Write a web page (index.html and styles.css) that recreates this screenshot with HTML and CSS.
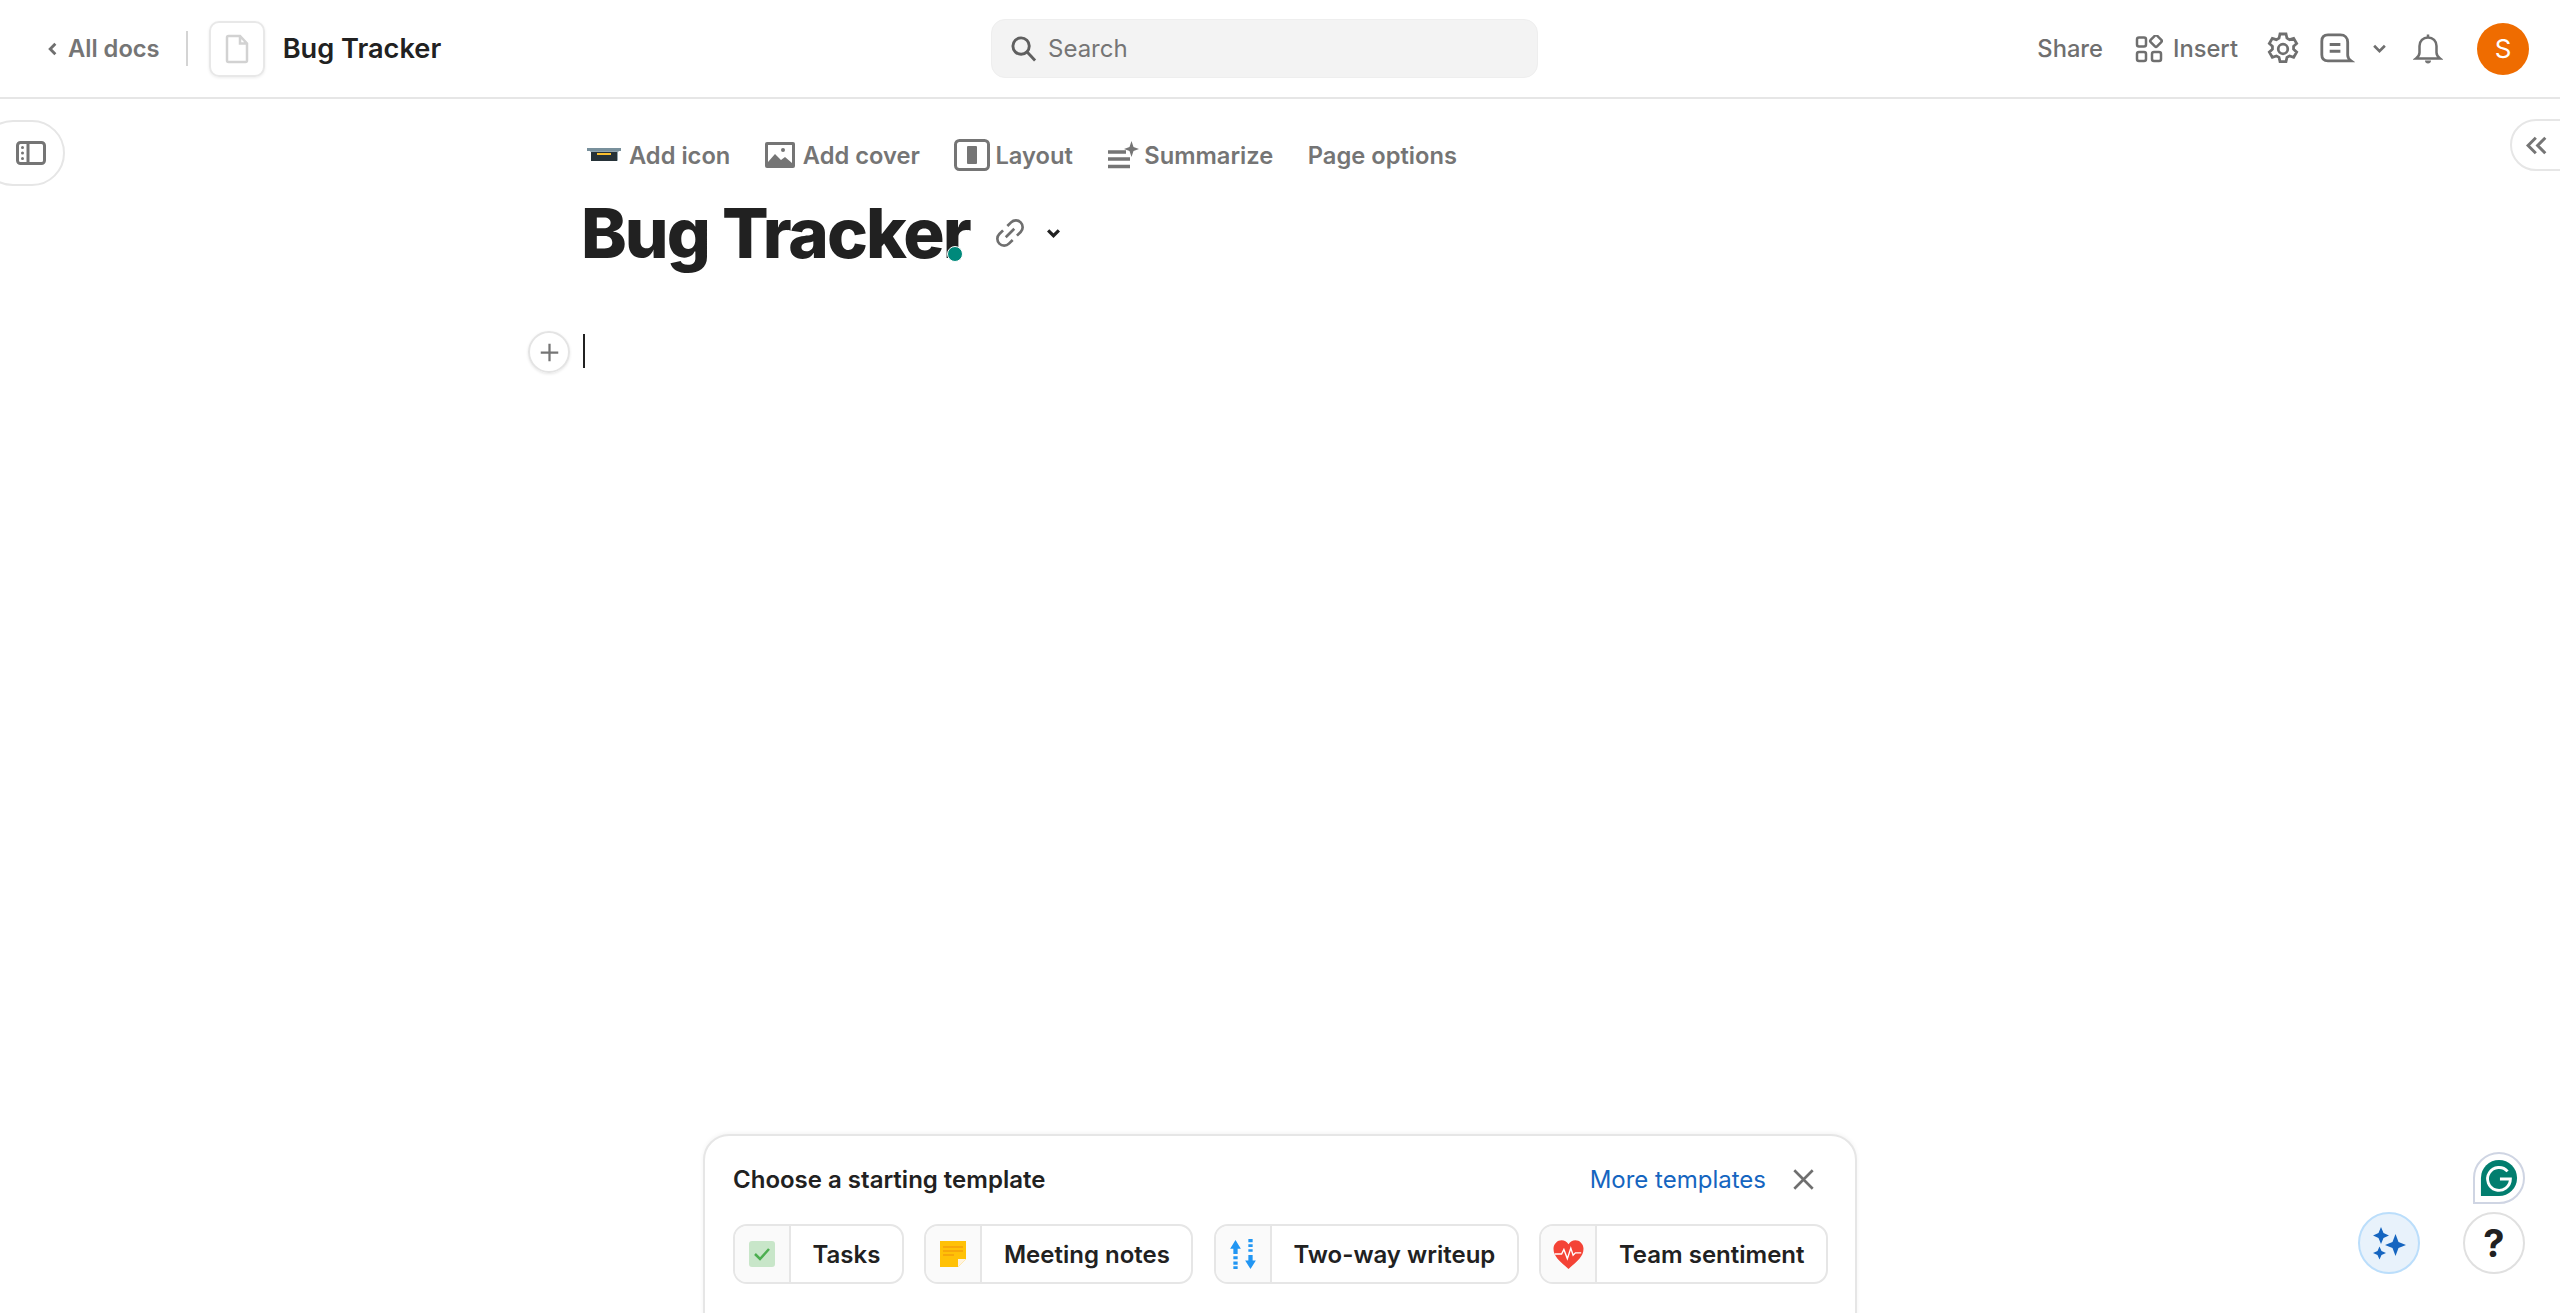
FILE: index.html
```html
<!DOCTYPE html>
<html lang="en">
<head>
<meta charset="utf-8">
<title>Bug Tracker</title>
<link rel="stylesheet" href="styles.css">
</head>
<body>
<header class="topbar">
  <div class="top-left">
    <a class="back"><svg class="chev-left" viewBox="0 0 10 14"><path d="M7.500 2.500 3 7l4.500 4.500"/></svg>All docs</a>
    <span class="divider"></span>
    <span class="doc-box"><svg viewBox="0 0 24 30" class="doc-ico"><path d="M2 3.500C2 2.600 2.600 2 3.500 2H15l7 7.500v17c0 .9-.6 1.500-1.500 1.500h-17C2.600 28 2 27.400 2 26.500zM15 2v7.500h7"/></svg></span>
    <span class="doc-title">Bug Tracker</span>
  </div>
  <div class="search">
    <svg class="search-ico" viewBox="0 0 28 28"><circle cx="11.500" cy="11.500" r="8.500"/><path d="m18 18 8 8.500"/></svg>
    <span>Search</span>
  </div>
  <div class="top-right">
    <span class="t-action share">Share</span>
    <span class="t-action insert">
      <svg class="i-26" viewBox="0 0 28 28"><rect x="2" y="2.500" width="9" height="9" rx="2"/><rect x="16.500" y="1.500" width="9" height="9" rx="1.500" transform="rotate(45 21 6)"/><rect x="2" y="17" width="9" height="9" rx="2"/><rect x="17" y="17" width="9" height="9" rx="2"/></svg>
      Insert
    </span>
    <svg class="gear" viewBox="0 0 30 30"><circle cx="15" cy="15" r="4"/><path d="M12.500 2.500h5l.8 3.500 2.200 1.200 3.400-1.100 2.500 4.300-2.600 2.400v2.400l2.600 2.400-2.500 4.300-3.400-1.100-2.200 1.200-.8 3.500h-5l-.8-3.500-2.200-1.200-3.400 1.100-2.500-4.300 2.600-2.400v-2.400L3.600 10.400l2.500-4.300 3.400 1.100 2.200-1.200z"/></svg>
    <svg class="chat" viewBox="0 0 32 30"><path d="M8 2.500h11c4 0 6.500 2.500 6.500 6.500v11.500c0 2 1 3.500 3 5H8c-3.500 0-5.500-2-5.500-5.500V8C2.500 4.500 4.500 2.500 8 2.500z"/><path d="M9.500 11h9.500M9.500 17h9.500"/></svg>
    <svg class="small-chev" viewBox="0 0 14 10"><path d="M2 2.500 7 7.500l5-5"/></svg>
    <svg class="bell" viewBox="0 0 28 32"><path d="M2 25.500c2-1.500 3.500-3 3.500-6V13C5.500 8 9 4.500 14 4.500S22.500 8 22.500 13v6.500c0 3 1.500 4.500 3.500 6zM14 1.500v3"/><path class="fill" d="M11 27.500h6c0 2-1.200 3-3 3s-3-1-3-3z"/></svg>
    <span class="avatar">S</span>
  </div>
</header>

<main class="doc">
  <nav class="doc-tools">
    <span class="tool">
      <svg class="usb" viewBox="0 0 34 16"><path d="M0 2h34l-3 3v8q0 1-1 1H5q-1 0-1-1V5z" fill="#90a4ae"/><rect x="4" y="5" width="26" height="9" fill="#263238"/><path d="M10 6h14v2H10z" fill="#fbc02d"/><rect x="0" y="1" width="34" height="3" fill="#78909c"/></svg>
      Add icon
    </span>
    <span class="tool">
      <svg class="tool-ico img" viewBox="0 0 30 26"><rect width="30" height="26" rx="2" class="fill"/><rect x="3" y="3" width="24" height="19" fill="#fff"/><path class="fill" d="m3 20 7-8 6 6 4-3 7 6v3H3z"/><circle class="fill" cx="18" cy="8" r="2"/></svg>
      Add cover
    </span>
    <span class="tool tight">
      <svg class="tool-ico lay" viewBox="0 0 36 32"><rect x="1.500" y="1.500" width="33" height="29" rx="4"/><rect class="fill" x="13" y="7" width="10" height="18" rx="1"/></svg>
      Layout
    </span>
    <span class="tool tight">
      <svg class="tool-ico sum" viewBox="0 0 32 28"><path d="M1 11h18M1 18h22M1 25.500h22"/><path class="fill nost" d="m24.500 0 2 6 5.500 2-5.500 2-2 6-2-6-5.500-2 5.500-2z"/></svg>
      Summarize
    </span>
    <span class="tool">Page options</span>
  </nav>
  <div class="title-row">
    <h1>Bug Tracker</h1>
    <span class="presence"></span>
    <svg class="link" viewBox="0 0 30 30"><path d="M12.500 8.500 16 5a6 6 0 0 1 9 9l-3.500 3.500M17.500 21.500 14 25a6 6 0 0 1-9-9l3.500-3.500M11 19l8-8"/></svg>
    <svg class="title-chev" viewBox="0 0 14 10"><path d="M2 2 7 7l5-5"/></svg>
  </div>
  <div class="line">
    <span class="plus"><svg viewBox="0 0 20 20"><path d="M10 3v14M3 10h14"/></svg></span>
    <span class="caret"></span>
  </div>
</main>

<button class="side-tab left-tab"><svg viewBox="0 0 30 24"><rect x="1.500" y="1.500" width="27" height="21" rx="3"/><path d="M12 1.500v21"/><circle class="fill nost" cx="6.500" cy="6.500" r="1.500"/><circle class="fill nost" cx="6.500" cy="12" r="1.500"/><circle class="fill nost" cx="6.500" cy="17.500" r="1.500"/></svg></button>
<button class="side-tab right-tab"><svg viewBox="0 0 20 16"><path d="M9 1.500 2.500 8 9 14.500M17 1.500 10.500 8 17 14.500"/></svg></button>

<section class="templates">
  <div class="tpl-head">
    <strong>Choose a starting template</strong>
    <div class="tpl-actions">
      <a class="more">More templates</a>
      <svg class="close" viewBox="0 0 20 20"><path d="M2 2l16 16M18 2 2 18"/></svg>
    </div>
  </div>
  <div class="tpl-list">
    <div class="tpl">
      <span class="tpl-ico"><svg viewBox="0 0 26 26"><rect width="26" height="26" rx="3" fill="#c8e6c9"/><path d="m6 13 5 5 9-10" fill="none" stroke="#4caf50" stroke-width="2.500"/></svg></span>
      <span class="tpl-name">Tasks</span>
    </div>
    <div class="tpl">
      <span class="tpl-ico"><svg viewBox="0 0 26 26"><path d="M0 0h26v18l-8 8H0z" fill="#ffc107"/><path d="M18 26v-8h8z" fill="#fff3e0"/><path d="M3 6h20M3 10h20M3 14h11" stroke="#f59e0b" stroke-width="1.500"/></svg></span>
      <span class="tpl-name">Meeting notes</span>
    </div>
    <div class="tpl">
      <span class="tpl-ico"><svg class="arrows" viewBox="0 0 26 28"><path d="M6 1 11 9H8v5H4V9H1zM4 16h4v3H4zM4 21h4v3H4zM4 25.500h4V28H4z" fill="#2196f3"/><path d="M20 28l-5-8h3v-5h4v5h3zM18 12h4v-2.500h-4zM18 7.500h4V5h-4zM18 3h4V0h-4z" fill="#2196f3"/></svg></span>
      <span class="tpl-name">Two-way writeup</span>
    </div>
    <div class="tpl">
      <span class="tpl-ico"><svg class="heart" viewBox="0 0 28 26"><path d="M14 26C6 19 1 15 1 8.500 1 4 4.500 1 8 1c2.500 0 4.500 1 6 3.500C15.500 2 17.500 1 20 1c3.500 0 7 3 7 7.500C27 15 22 19 14 26z" fill="#f44336"/><path d="M2 13h6l2-4 3 8 3-9 2 6 2-2h5" fill="none" stroke="#fff" stroke-width="1.200"/></svg></span>
      <span class="tpl-name">Team sentiment</span>
    </div>
  </div>
</section>

<div class="grammarly"><svg viewBox="0 0 40 40"><path d="M20 1a19 19 0 0 1 0 38H1V20A19 19 0 0 1 20 1z" fill="#027e6f"/><path d="M29 13a12 12 0 1 0 3 8H21" fill="none" stroke="#fff" stroke-width="3"/></svg></div>
<button class="fab ai"><svg viewBox="0 0 36 36"><path d="M10 2l2.500 6L18 10.500l-5.500 2.500L10 19l-2.500-6L2 10.500 7.500 8zM24.500 9l3 8L35 20l-7.500 3-3 8-3-8L14 20l7.500-3zM8.500 21.500l2 4.500 4.500 2-4.500 2-2 4.500-2-4.500L2 28l4.500-2z"/></svg></button>
<button class="fab help">?</button>
</body>
</html>
```
FILE: styles.css
```css
* { box-sizing: border-box; }
html, body { margin: 0; height: 100%; }
body {
  position: relative;
  overflow: hidden;
  background: #fff;
  color: #212121;
  font-family: Inter, "Liberation Sans", sans-serif;
}
svg { display: block; fill: none; stroke: #6f6f6f; stroke-width: 2.500; }
svg .fill { fill: #757575; stroke: none; }
svg .nost { stroke: none; }

.topbar {
  height: 99px;
  border-bottom: 2px solid #e6e6e6;
  display: grid;
  grid-template-columns: 945px 547px 1fr;
  align-items: center;
  padding: 0 31px 0 46px;
}
.top-left, .top-right { display: flex; align-items: center; }
.top-right { justify-content: flex-end; }
.back { display: flex; align-items: center; gap: 9px; font-size: 23.700px; font-weight: 600; color: #757575; }
.chev-left { width: 13px; height: 16px; stroke-width: 2.500; }
.divider { width: 2px; height: 35px; background: #d4d4d4; margin: 0 21px 0 26px; }
.doc-box {
  width: 56px; height: 56px; border: 2px solid #e8e8e8; border-radius: 10px;
  display: flex; align-items: center; justify-content: center;
  box-shadow: 0 1px 3px rgba(0,0,0,.08);
}
.doc-ico { width: 24px; height: 30px; stroke: #d2d2d2; }
.doc-title { margin-left: 18px; font-size: 27.200px; font-weight: 600; color: #212121; }

.search {
  height: 59px; background: #f3f3f3; border: 1px solid #eee; border-radius: 14px;
  display: flex; align-items: center; gap: 11px; padding-left: 18px;
  color: #757575; font-size: 24px;
}
.search-ico { width: 27px; height: 27px; stroke: #5f5f5f; stroke-width: 3; }

.t-action { display: flex; align-items: center; gap: 10px; font-size: 23.700px; font-weight: 500; color: #6f6f6f; }
.share { margin-right: 32px; }
.i-26 { width: 28px; height: 28px; }
.gear { width: 36px; height: 36px; margin-left: 27px; stroke-width: 2.300; }
.chat { width: 36px; height: 34px; margin-left: 18px; }
.small-chev { width: 15px; height: 11px; margin-left: 17px; }
.bell { width: 30px; height: 32px; margin-left: 26px; }
.avatar {
  width: 52px; height: 52px; margin-left: 34px; border-radius: 50%;
  background: #ef6c00; color: #fff; font-size: 26px;
  display: flex; align-items: center; justify-content: center;
}

.doc { padding: 0 0 0 581px; }
.doc-tools { display: flex; align-items: center; height: 46px; margin-top: 33px; padding-left: 6px; gap: 34.500px; }
.tool { display: flex; align-items: center; gap: 8px; font-size: 23.700px; font-weight: 600; color: #757575; white-space: nowrap; }
.tool.tight { gap: 5px; }
.usb { width: 34px; height: 16px; stroke: none; }
.tool-ico.img { width: 30px; height: 26px; stroke: none; }
.tool-ico.lay { width: 36px; height: 32px; stroke: #757575; stroke-width: 3; }
.tool-ico.sum { width: 32px; height: 28px; stroke: #757575; stroke-width: 3.500; }

.title-row { display: flex; align-items: center; position: relative; margin-top: 16px; height: 78px; }
h1 { margin: 0; font-size: 69px; font-weight: 800; letter-spacing: -2px; color: #212121; line-height: 78px; }
.presence {
  position: absolute; left: 366px; top: 52px; width: 16px; height: 16px; border-radius: 50%;
  background: #00897b; border: 1px solid #fff;
}
.link { width: 32px; height: 32px; margin-left: 24px; stroke: #6f6f6f; }
.title-chev { width: 15px; height: 11px; margin-left: 20px; stroke: #212121; stroke-width: 3; }

.line { display: flex; align-items: center; position: relative; margin-top: 61px; height: 36px; }
.plus {
  position: absolute; left: -53px; top: -2px; width: 42px; height: 42px; border-radius: 50%;
  border: 2px solid #e4e4e4; display: flex; align-items: center; justify-content: center;
  box-shadow: 0 1px 3px rgba(0,0,0,.1);
}
.plus svg { width: 25px; height: 25px; stroke: #757575; stroke-width: 1.800; }
.caret { width: 2px; height: 34px; margin-left: 2px; background: #212121; }

.side-tab { position: absolute; background: #fff; border: 2px solid #e6e6e6; padding: 0; display: flex; align-items: center; }
.left-tab { left: -20px; top: 120px; width: 85px; height: 66px; border-radius: 33px; justify-content: flex-end; padding-right: 17px; }
.left-tab svg { width: 30px; height: 24px; stroke: #757575; stroke-width: 3; }
.left-tab .fill { fill: #757575; }
.right-tab { left: 2510px; top: 119px; width: 80px; height: 52px; border-radius: 26px; padding-left: 13px; }
.right-tab svg { width: 24px; height: 19px; stroke: #757575; stroke-width: 2.500; }

.templates {
  position: absolute; left: 703px; top: 1134px; width: 1154px; height: 220px;
  border: 2px solid #e6e6e6; border-radius: 26px; background: #fff;
  padding: 28px 27px 28px 28px; box-shadow: 0 -1px 4px rgba(0,0,0,.05);
}
.tpl-head { display: flex; align-items: center; justify-content: space-between; height: 30px; }
.tpl-head strong { font-size: 24px; font-weight: 600; color: #212121; }
.tpl-actions { display: flex; align-items: center; gap: 26px; }
.more { font-size: 24px; color: #1565c0; }
.close { width: 23px; height: 23px; stroke: #6f6f6f; stroke-width: 2.300; margin-right: 13px; }
.tpl-list { display: flex; justify-content: space-between; margin-top: 30px; }
.tpl { display: flex; height: 60px; border: 2px solid #e6e6e6; border-radius: 14px; overflow: hidden; align-items: stretch; }
.tpl-ico { width: 56px; background: #fafafa; border-right: 2px solid #e6e6e6; display: flex; align-items: center; justify-content: center; }
.tpl-ico svg { width: 26px; height: 26px; stroke: none; }
.tpl-ico .arrows { width: 28px; height: 30px; }
.tpl-ico .heart { width: 33px; height: 30px; }
.tpl-name { padding: 0 21.500px; display: flex; align-items: center; font-size: 24px; font-weight: 600; color: #212121; }

.grammarly {
  position: absolute; left: 2473px; top: 1152px; width: 52px; height: 52px;
  border: 2px solid #cfd5e3; border-radius: 26px 26px 26px 0; background: #fff;
  padding: 5px;
}
.grammarly svg { width: 38px; height: 38px; stroke: none; }
.fab { position: absolute; top: 1212px; width: 62px; height: 62px; border-radius: 50%; padding: 0; display: flex; align-items: center; justify-content: center; }
.ai { left: 2358px; background: #e8f2fb; border: 2px solid #bbdefb; }
.ai svg { width: 36px; height: 36px; fill: #1565c0; stroke: none; }
.help { left: 2463px; background: #fff; border: 2px solid #e0e0e0; font-family: Inter, sans-serif; font-size: 38px; font-weight: 700; color: #212121; }
```
